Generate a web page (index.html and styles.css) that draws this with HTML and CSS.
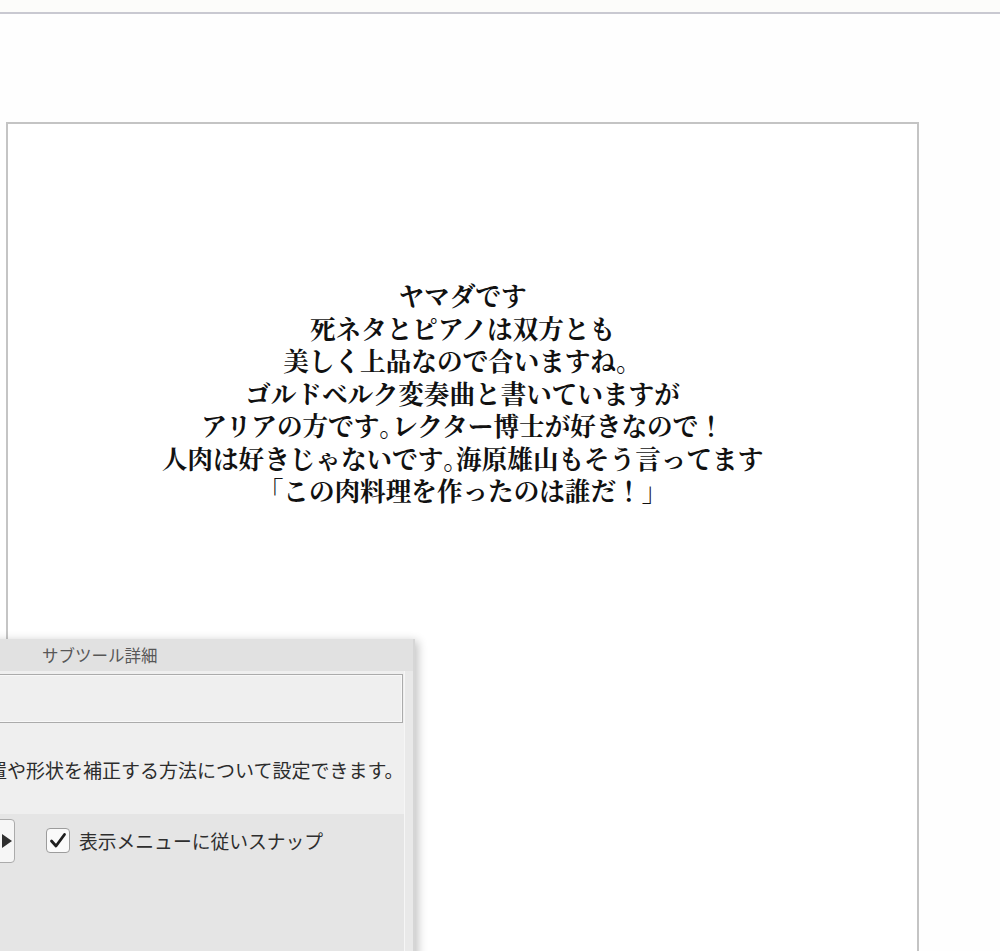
FILE: index.html
```html
<!DOCTYPE html>
<html lang="ja">
<head>
<meta charset="utf-8">
<title>キャンバス</title>
<link rel="stylesheet" href="styles.css">
</head>
<body>
  <div class="topbar"></div>

  <main class="workspace">
    <section class="canvas">
      <p class="poem">ヤマダです<br>死ネタとピアノは双方とも<br>美しく上品なので合いますね。<br>ゴルドベルク変奏曲と書いていますが<br>アリアの方です<span class="kuten">。</span>レクター博士が好きなので！<br>人肉は好きじゃないです<span class="kuten">。</span>海原雄山もそう言ってます<br>「この肉料理を作ったのは誰だ！」</p>
    </section>
  </main>

  <!-- floating sub tool detail palette -->
  <div class="subtool">
    <div class="subtool-title">サブツール詳細</div>
    <div class="subtool-body">
      <div class="subtool-main">
        <div class="field"></div>
        <p class="desc">置や形状を補正する方法について設定できます。</p>
        <div class="options">
          <button class="expand" type="button">
            <svg width="10" height="14" viewBox="0 0 10 14"><path d="M0 0 L10 7 L0 14 Z" fill="#2e2e2e"/></svg>
          </button>
          <label class="check">
            <span class="box">
              <svg width="18" height="17" viewBox="0 0 18 17"><path d="M2.5 9 L7 14 L15.5 2.5" fill="none" stroke="#1e1e1e" stroke-width="2.8" stroke-linecap="round" stroke-linejoin="round"/></svg>
            </span>
            <span class="check-label">表示メニューに従いスナップ</span>
          </label>
        </div>
      </div>
      <div class="scroll-track"></div>
    </div>
  </div>
</body>
</html>
```

FILE: styles.css
```css
html, body {
  margin: 0;
  padding: 0;
  height: 100%;
  overflow: hidden;
  background: #fefefe;
}

body {
  position: relative;
  font-family: "Noto Sans CJK JP", "Noto Sans", sans-serif;
}

.topbar {
  height: 12px;
  background: #fcfcfa;
  border-bottom: 2px solid #c9c9d1;
}

.workspace {
  padding: 108px 0 0 6px;
}

.canvas {
  width: 909px;
  height: 900px;
  border: 2px solid #c4c4c4;
  background: #ffffff;
}

.poem {
  margin: 0;
  padding-top: 155px;
  text-align: center;
  font-family: "Noto Serif CJK JP", "Noto Sans CJK JP", serif;
  font-weight: 700;
  font-size: 25.6px;
  line-height: 32.5px;
  color: #111111;
}

/* narrow full stop inside a line */
.kuten {
  letter-spacing: -0.5em;
}

/* palette window */
.subtool {
  position: absolute;
  left: -40px;
  top: 639px;
  width: 455px;
  height: 400px;
  box-shadow: 3px 2px 9px rgba(0, 0, 0, 0.24);
  background: #efefef;
  display: flex;
  flex-direction: column;
}

.subtool-title {
  height: 32px;
  line-height: 32px;
  padding-left: 82px;
  background: #e1e1e1;
  color: #575757;
  font-size: 16.5px;
  border-right: 2px solid #d6d6d6;
}

.subtool-body {
  flex: 1;
  display: flex;
  border-right: 2px solid #d6d6d6;
}

.subtool-main {
  flex: 1;
  display: flex;
  flex-direction: column;
  background: #efefef;
}

.scroll-track {
  width: 8px;
  background: #e9e9e9;
  border-left: 1px solid #f6f6f6;
}

.field {
  margin: 3px 1px 0 0;
  height: 47px;
  border: 1px solid #ababab;
  box-shadow: inset 0 0 0 1px #f8f8f8;
  background: #efefef;
}

.desc {
  margin: 0;
  height: 91px;
  box-sizing: border-box;
  padding: 35px 0 0 28px;
  font-size: 19px;
  line-height: 24px;
  color: #2c2c2c;
  white-space: nowrap;
}

.options {
  flex: 1;
  background: #e5e5e5;
  display: flex;
  align-items: flex-start;
  padding: 5px 0 0 15px;
}

.expand {
  width: 40px;
  height: 44px;
  margin: 0;
  padding: 0 2px 0 0;
  border: 1px solid #ababab;
  border-radius: 4px;
  background: #f6f6f6;
  display: flex;
  align-items: center;
  justify-content: flex-end;
}

.check {
  display: flex;
  align-items: center;
  gap: 9px;
  margin: 9px 0 0 31px;
}

.box {
  width: 22px;
  height: 23px;
  border: 1px solid #9c9c9c;
  border-radius: 4px;
  background: #fafafa;
  display: flex;
  align-items: center;
  justify-content: center;
}

.check-label {
  font-size: 18.8px;
  line-height: 24px;
  color: #2e2e2e;
}
```
